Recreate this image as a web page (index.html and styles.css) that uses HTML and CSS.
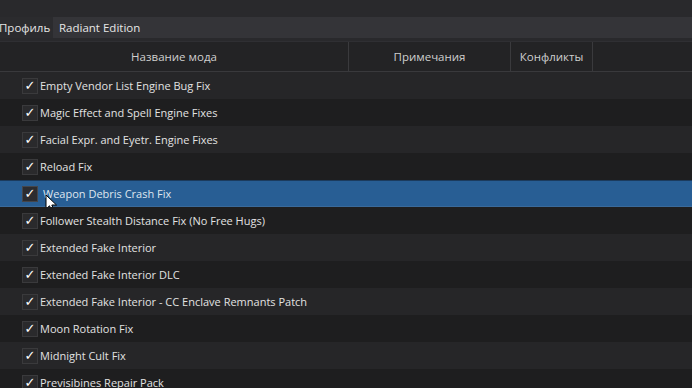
FILE: index.html
```html
<!DOCTYPE html>
<html lang="ru">
<head>
<meta charset="utf-8">
<link rel="stylesheet" href="styles.css">
</head>
<body>
<div class="app">
  <div class="topband"></div>
  <div class="profile">
    <span class="profile-label">Профиль</span>
    <div class="combo">Radiant Edition</div>
  </div>
  <div class="gap"></div>
  <div class="table">
    <div class="thead">
      <div class="th c-name">Название мода</div>
      <div class="th c-notes">Примечания</div>
      <div class="th c-conf">Конфликты</div>
      <div class="th c-rest"></div>
    </div>
    <div class="tbody">
      <div class="row"><span class="cb">✓</span><span class="name">Empty Vendor List Engine Bug Fix</span></div>
      <div class="row"><span class="cb">✓</span><span class="name">Magic Effect and Spell Engine Fixes</span></div>
      <div class="row"><span class="cb">✓</span><span class="name">Facial Expr. and Eyetr. Engine Fixes</span></div>
      <div class="row"><span class="cb">✓</span><span class="name">Reload Fix</span></div>
      <div class="row selected"><span class="cb">✓</span><span class="name">Weapon Debris Crash Fix</span>
        <svg class="cursor" width="14" height="20" viewBox="0 0 14 20"><path d="M1 1 L1 15 L4.5 11.8 L7.2 18 L9.4 17 L6.8 11 L11.5 11 Z" fill="#fff" stroke="#000" stroke-width="1"/></svg>
      </div>
      <div class="row"><span class="cb">✓</span><span class="name">Follower Stealth Distance Fix (No Free Hugs)</span></div>
      <div class="row"><span class="cb">✓</span><span class="name">Extended Fake Interior</span></div>
      <div class="row"><span class="cb">✓</span><span class="name">Extended Fake Interior DLC</span></div>
      <div class="row"><span class="cb">✓</span><span class="name">Extended Fake Interior - CC Enclave Remnants Patch</span></div>
      <div class="row"><span class="cb">✓</span><span class="name">Moon Rotation Fix</span></div>
      <div class="row"><span class="cb">✓</span><span class="name">Midnight Cult Fix</span></div>
      <div class="row"><span class="cb">✓</span><span class="name">Previsibines Repair Pack</span></div>
    </div>
  </div>
</div>
</body>
</html>
```
FILE: styles.css
```css
* { box-sizing: border-box; }
html, body { margin: 0; padding: 0; }
body {
  width: 692px;
  height: 388px;
  overflow: hidden;
  background: #1e1e20;
  font-family: "Open Sans", "Noto Sans", sans-serif;
  font-size: 11px;
  color: #e2e2e2;
}
.app { display: flex; flex-direction: column; }
.topband { height: 17px; background: #29292c; }
.profile {
  height: 21px;
  display: flex;
  align-items: stretch;
  background: #2b2b2e;
}
.profile-label {
  width: 54px;
  display: flex;
  align-items: center;
  margin-left: -1px;
  color: #e4e4e4;
  font-size: 11.5px;
}
.combo {
  flex: 1;
  background: #343438;
  display: flex;
  align-items: center;
  padding-left: 6px;
  color: #e6e6e6;
  font-size: 11.5px;
}
.gap { height: 4px; background: #29292c; border-bottom: 1px solid #2f2f33; }
.thead {
  height: 30px;
  display: flex;
  background: #232325;
  border-bottom: 1px solid #39393c;
}
.th {
  display: flex;
  align-items: center;
  justify-content: center;
  color: #cfcfcf;
  border-right: 1px solid #3a3a3d;
  font-size: 11.5px;
}
.c-name { width: 349px; }
.c-notes { width: 162px; }
.c-conf { width: 82px; }
.c-rest { flex: 1; border-right: none; }
.row {
  position: relative;
  height: 27px;
  display: flex;
  align-items: center;
  padding-left: 22px;
  background: #1e1e1f;
}
.row:nth-child(odd) { background: #262628; }
.row.selected {
  background: #285e94;
  border-top: 1px solid #1b3b5e;
  border-bottom: 1px solid #3a6a9a;
}
.cb {
  width: 16px;
  height: 16px;
  background: #2a2a2c;
  border: 1px solid #3a3a3c;
  display: flex;
  align-items: center;
  justify-content: center;
  color: #fff;
  font-family: "DejaVu Sans", sans-serif;
  font-weight: bold;
  font-size: 13px;
  line-height: 1;
  margin-right: 2px;
}
.selected .cb { background: #2c2c30; border-color: #44464c; }
.name { white-space: nowrap; }
.selected .name { color: #dfe6ef; margin-left: 3px; }
.cursor { position: absolute; left: 45px; top: 13px; }
```
